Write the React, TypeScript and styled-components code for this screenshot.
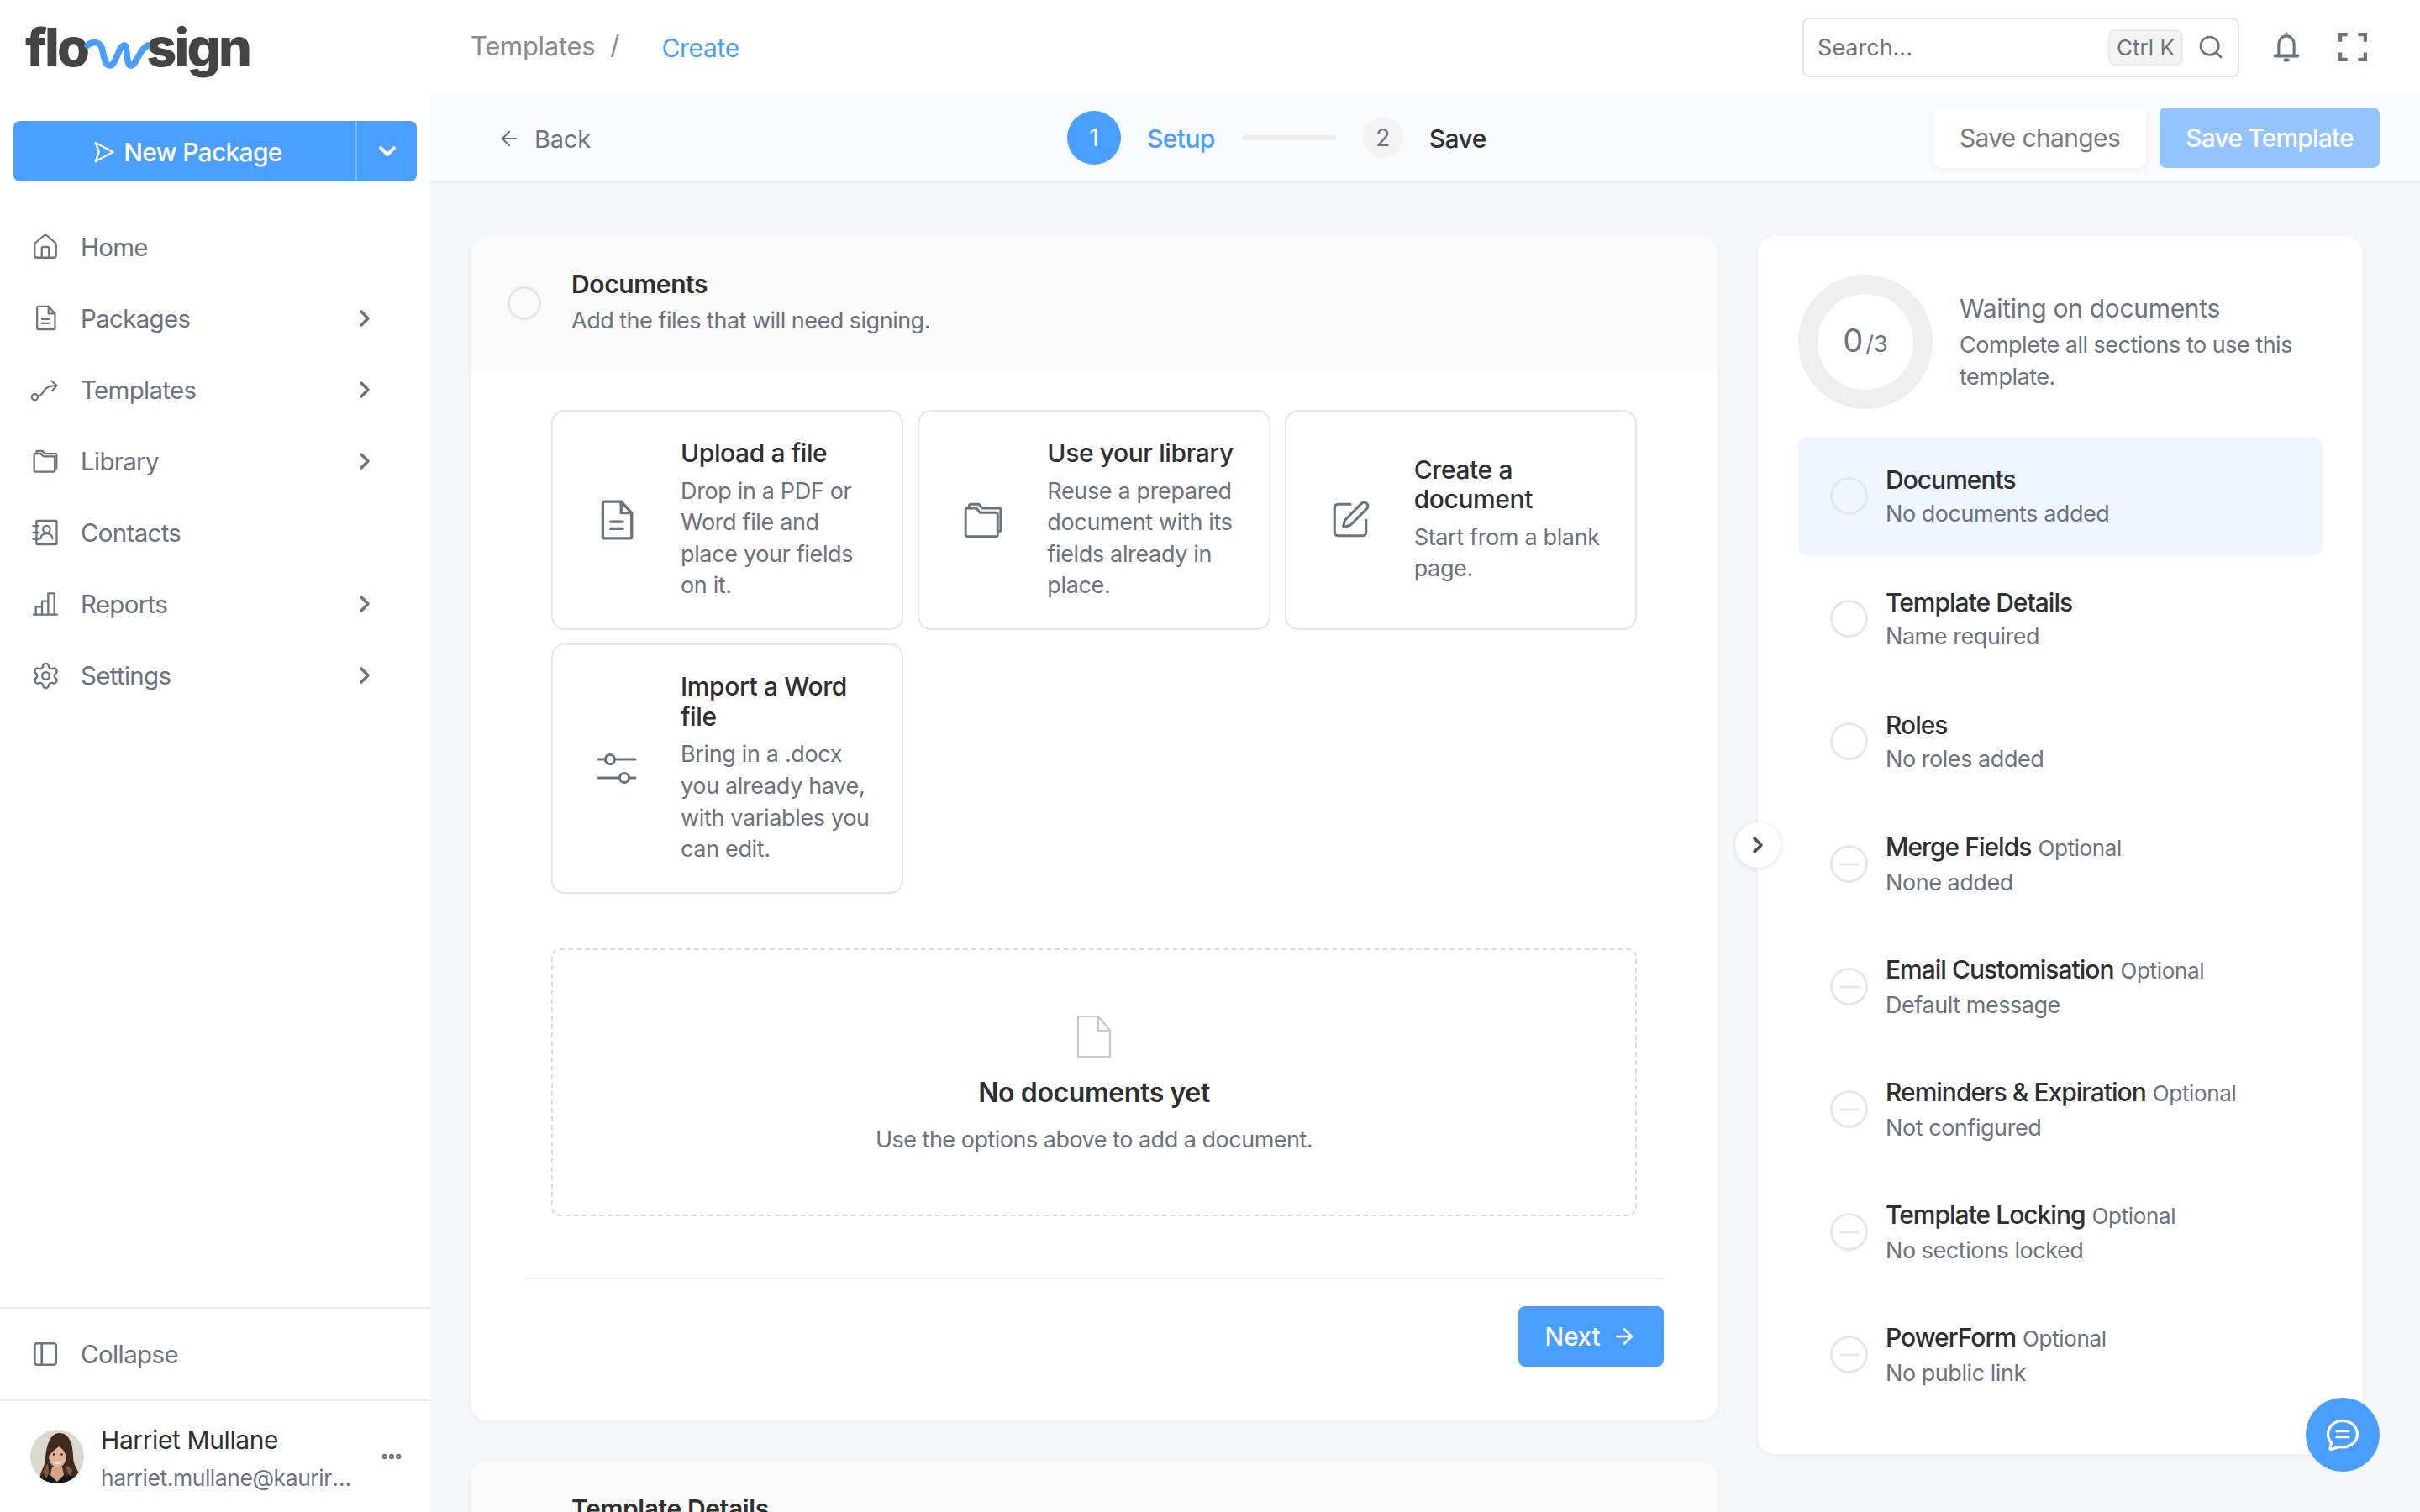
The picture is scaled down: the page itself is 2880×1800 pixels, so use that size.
import React from "react";
import styled, { createGlobalStyle } from "styled-components";
import { ChevronDown, ChevronRight, House, Settings, PanelLeft, ArrowLeft, ArrowRight, Search, SquarePen, Ellipsis, Minus } from "lucide-react";

const Global = createGlobalStyle`
  html, body { margin: 0; padding: 0; width: 2880px; height: 1800px; overflow: hidden; background: #f5f7fa; }
  body, button, input { font-family: Inter, "Noto Sans", sans-serif; }
  * { box-sizing: border-box; }
`;

const BLUE = "#4a9eff";
const INK = "#2e2f31";
const GREY = "#6b7280";

const Shell = styled.div`
  position: relative; display: grid; grid-template-columns: 512px 1fr; width: 2880px; height: 1800px; overflow: hidden;
`;
const Sidebar = styled.aside`display: flex; flex-direction: column; background: #fff; height: 1800px;`;
const LogoRow = styled.div`display: flex; align-items: flex-start; height: 144px; padding: 18px 0 0 30px; color: #444;`;
const LogoWord = styled.span`font-size: 63px; line-height: 76px; font-weight: 800; letter-spacing: -2.8px; font-variant-ligatures: none;`;
const LogoWave = styled.svg`width: 78px; height: 42px; margin: 26px -4px 0 -4px; flex: none; position: relative;`;
const NewGroup = styled.div`display: flex; height: 72px; margin: 0 16px; background: ${BLUE}; border-radius: 8px; color: #fff;`;
const NewMain = styled.div`flex: 1; display: flex; align-items: center; justify-content: center; gap: 10px; font-size: 30px; font-weight: 500; letter-spacing: -0.7px; padding: 2px 0 0 6px;`;
const NewCaret = styled.div`width: 73px; display: flex; align-items: center; justify-content: center; border-left: 2px solid rgba(255,255,255,.3); margin: 1px 0;`;
const Nav = styled.nav`display: flex; flex-direction: column; padding-top: 35px; flex: 1;`;
const NavItem = styled.div`display: flex; align-items: center; height: 85.1px; padding-left: 36px; color: ${GREY}; font-size: 29.5px; letter-spacing: -0.7px;`;
const NavIcon = styled.span`width: 36px; height: 36px; display: flex; align-items: center; justify-content: center; margin-right: 24px; flex: none;`;
const NavLabel = styled.span`width: 322px;`;
const CollapseRow = styled.div`display: flex; align-items: center; height: 110px; padding-left: 36px; border-top: 2px solid #ececec; color: ${GREY}; font-size: 29.5px; letter-spacing: -0.6px;`;
const UserRow = styled.div`display: flex; align-items: center; height: 134px; padding: 0 34px 0 36px; border-top: 2px solid #ececec;`;
const Avatar = styled.div`width: 64px; height: 64px; border-radius: 50%; overflow: hidden; flex: none; margin-right: 20px; svg { display: block; }`;
const UserText = styled.div`width: 304px; flex: none; display: flex; flex-direction: column; gap: 7px; padding-top: 5px;`;
const UserName = styled.div`font-size: 30px; line-height: 38px; color: ${INK}; letter-spacing: -0.4px;`;
const UserMail = styled.div`font-size: 26.5px; line-height: 38px; color: ${GREY}; letter-spacing: -0.45px; white-space: nowrap; overflow: hidden; text-overflow: ellipsis;`;
const UserMore = styled.span`margin-left: 28px; display: flex; color: ${GREY};`;

const Main = styled.main`display: flex; flex-direction: column; min-width: 0; height: 1800px;`;
const TopBar = styled.header`height: 112px; background: #fff; display: flex; align-items: center; padding: 0 0 0 48px; flex: none;`;
const Crumb = styled.span`font-size: 31px; color: #8a8a8a; letter-spacing: -0.3px; margin-top: -4px;`;
const Slash = styled.span`font-size: 31px; color: #8a8a8a; margin: -6px 50px 0 18px;`;
const CrumbNow = styled.span`font-size: 30px; color: ${BLUE}; letter-spacing: -0.3px; margin-top: 2px;`;
const SearchBox = styled.div`margin-left: auto; width: 520px; height: 71px; border: 2px solid #e6e6e6; border-radius: 8px; display: flex; align-items: center; padding: 0 16px; font-size: 27px; color: ${GREY};`;
const SearchText = styled.span`flex: 1;`;
const Kbd = styled.span`height: 43px; width: 89px; background: #f3f3f3; border: 2px solid #ebebeb; border-radius: 8px; display: flex; align-items: center; justify-content: center; font-size: 26px; color: ${GREY}; margin-right: 17px; white-space: nowrap;`;
const TopIcons = styled.div`display: flex; align-items: center; gap: 45px; margin: 0 63px 0 39px; color: ${GREY};`;
const SubBar = styled.div`height: 106px; flex: none; background: #fafbfd; border-bottom: 2px solid #ececef; display: grid; grid-template-columns: 678px auto 1fr; align-items: center; padding: 0 48px 0 80px;`;
const Back = styled.div`display: flex; align-items: center; gap: 16px; font-size: 29px; color: ${GREY}; letter-spacing: -0.2px; padding-top: 2px;`;
const Stepper = styled.div`display: flex; align-items: center;`;
const StepNum = styled.span<{ $on?: boolean }>`
  width: ${p => (p.$on ? 64 : 48)}px; height: ${p => (p.$on ? 64 : 48)}px; border-radius: 50%;
  display: flex; align-items: center; justify-content: center; font-size: 28px;
  background: ${p => (p.$on ? BLUE : "#f3f3f3")}; color: ${p => (p.$on ? "#fff" : GREY)};
`;
const StepName = styled.span<{ $on?: boolean }>`font-size: 30px; letter-spacing: -0.6px; margin-left: 31px; padding-top: 2px; font-weight: 500; color: ${p => (p.$on ? BLUE : INK)};`;
const StepLine = styled.span`width: 112px; height: 6px; border-radius: 3px; background: #ececec; margin: 0 32px;`;
const Actions = styled.div`display: flex; justify-content: flex-end; gap: 16px;`;
const GhostBtn = styled.div`width: 253px; height: 72px; background: #fff; border-radius: 8px; box-shadow: 0 2px 8px rgba(20,30,50,.06); display: flex; align-items: center; justify-content: center; font-size: 30px; color: #7b7b7b; letter-spacing: -0.65px;`;
const SolidBtn = styled.div`width: 262px; height: 72px; background: #93c4fd; border-radius: 8px; display: flex; align-items: center; justify-content: center; font-size: 30px; font-weight: 500; color: #fff; letter-spacing: -0.85px;`;
const Content = styled.div`flex: 1; display: grid; grid-template-columns: 1484px 720px; gap: 48px; padding: 63px 0 0 48px; align-items: start; overflow: hidden; background: #f5f7fa;`;
const LeftCol = styled.div`display: flex; flex-direction: column; gap: 49px;`;
const Card = styled.section`background: #fff; border-radius: 20px; box-shadow: 0 2px 6px rgba(20,30,50,.06); overflow: hidden;`;
const CardHead = styled.div`height: 160px; flex: none; background: #fafafa; display: flex; align-items: center; padding-left: 44px; gap: 36px;`;
const CardHeadText = styled.div`display: flex; flex-direction: column; min-height: 84px; margin-top: -3px;`;
const CardTitle = styled.div`font-size: 30px; line-height: 40px; font-weight: 600; color: ${INK}; letter-spacing: -0.4px;`;
const CardSub = styled.div`font-size: 27px; line-height: 40px; margin-top: 4px; color: ${GREY}; letter-spacing: -0.5px;`;
const HollowDot = styled.span<{ $size?: number }>`width: ${p => p.$size ?? 40}px; height: ${p => p.$size ?? 40}px; border-radius: 50%; border: 3px solid #e7e7e7; flex: none; display: flex; align-items: center; justify-content: center; color: #e7e7e7;`;
const CardBody = styled.div`padding: 47px 96px 0 96px;`;
const OptionGrid = styled.div`display: grid; grid-template-columns: repeat(3, 1fr); gap: 16.5px 17px; align-items: stretch;`;
const Option = styled.div`display: flex; align-items: center; border: 2px solid #e7e7e7; border-radius: 16px; padding: 32px 32px 32px 46px; box-shadow: 0 1px 2px rgba(0,0,0,.03);`;
const OptionIcon = styled.span`width: 60px; flex: none; margin-right: 46px; display: flex; justify-content: center; color: ${GREY};`;
const OptionText = styled.div`display: flex; flex-direction: column; gap: 8px;`;
const OptionTitle = styled.div`font-size: 30px; line-height: 35.5px; color: ${INK}; font-weight: 500; letter-spacing: -0.4px;`;
const OptionDesc = styled.div`font-size: 27px; line-height: 37.6px; color: ${GREY}; letter-spacing: -0.35px;`;
const Empty = styled.div`margin-top: 65px; height: 319px; border: 2px dashed #dcdcdc; border-radius: 10px; display: flex; flex-direction: column; align-items: center; padding-top: 77px;`;
const EmptyTitle = styled.div`font-size: 32px; line-height: 44px; font-weight: 600; color: ${INK}; margin-top: 19px; letter-spacing: -0.4px;`;
const EmptySub = styled.div`font-size: 27px; line-height: 40px; color: ${GREY}; margin-top: 14px; letter-spacing: -0.5px;`;
const CardFoot = styled.div`margin: 73px 64px 0 64px; border-top: 2px solid #f0f0f2; padding: 32px 0 64px; display: flex; justify-content: flex-end;`;
const NextBtn = styled.div`width: 173px; height: 72px; border-radius: 8px; background: ${BLUE}; color: #fff; display: flex; align-items: center; justify-content: center; gap: 14px; font-size: 30px; font-weight: 500; letter-spacing: -0.3px;`;

const Panel = styled.aside`position: relative; height: 1450px; background: #fff; border-radius: 20px; box-shadow: 0 2px 8px rgba(20,30,50,.05); padding: 46px 48px;`;
const Summary = styled.div`display: flex; align-items: center; gap: 32px; height: 160px; margin-bottom: 33px;`;
const Ring = styled.div`width: 160px; height: 160px; border-radius: 50%; border: 23px solid #efefef; flex: none; display: flex; align-items: baseline; justify-content: center; padding-top: 30px; color: ${GREY};`;
const RingBig = styled.span`font-size: 38px; line-height: 50px;`;
const RingSmall = styled.span`font-size: 27px; margin-left: 3px;`;
const SummaryTitle = styled.div`font-size: 30px; line-height: 40px; color: ${GREY}; letter-spacing: -0.3px;`;
const SummaryDesc = styled.div`font-size: 27px; line-height: 38px; color: ${GREY}; margin-top: 5px; letter-spacing: -0.5px;`;
const StepList = styled.div`display: flex; flex-direction: column; gap: 5px;`;
const StepRow = styled.div<{ $active?: boolean }>`display: flex; align-items: center; height: 141px; gap: 21px; padding-left: 38px; border-radius: 10px; background: ${p => (p.$active ? "#eff6ff" : "transparent")};`;
const StepText = styled.div`display: flex; flex-direction: column; padding-top: 2px;`;
const StepTitle = styled.div`font-size: 30px; line-height: 40px; font-weight: 500; color: ${INK}; letter-spacing: -1px; display: flex; align-items: baseline; gap: 8px;`;
const Optional = styled.span`font-size: 26px; font-weight: 400; color: ${GREY}; letter-spacing: -0.35px;`;
const StepDesc = styled.div`font-size: 27px; line-height: 40px; margin-top: 1px; color: ${GREY}; letter-spacing: -0.45px;`;
const Expand = styled.div`position: absolute; left: -27px; top: 698px; width: 54px; height: 54px; border-radius: 50%; background: #fff; box-shadow: 0 1px 6px rgba(20,30,50,.14); display: flex; align-items: center; justify-content: center; color: #4b5563;`;
const Fab = styled.div`position: absolute; right: 48px; bottom: 48px; width: 88px; height: 88px; border-radius: 50%; background: ${BLUE}; display: flex; align-items: center; justify-content: center; color: #fff;`;

const stroke = { fill: "none", stroke: "currentColor", strokeLinecap: "round" as const, strokeLinejoin: "round" as const };

const FileLines = ({ width, height, w }: { width: number; height: number; w: number }) => (
  <svg width={width} height={height} viewBox="0 0 20 24" {...stroke} strokeWidth={w}>
    <path d="M2.800 1.500h9.700l6 6.500v13.700c0 .5-.4.8-.8.8H2.800c-.5 0-.8-.3-.8-.8V2.300c0-.5.3-.8.8-.8Z" />
    <path d="M12.500 1.500V8h6" />
    <path d="M6.500 13h7M6.500 17h7" />
  </svg>
);
const FoldersIcon = ({ size = 32, w = 1.7 }: { size?: number; w?: number }) => (
  <svg width={size} height={size} viewBox="0 0 24 24" {...stroke} strokeWidth={w}>
    <path d="M2 20.500V6.200c0-.5.4-.9.900-.9h5.300l2 2.500h9.200c.5 0 .9.400.9.900v11.800c0 .5-.4.900-.9.900H2.900c-.5 0-.9-.4-.9-.9Z" />
    <path d="M4 5.300V3.900c0-.5.400-.9.900-.9h4.600l2 2.300h9.600c.5 0 .9.400.9.900v11.600c0 .5-.4.900-1.400.9" />
  </svg>
);
const RouteIcon = () => (
  <svg width={36} height={36} viewBox="0 0 24 24" {...stroke} strokeWidth={1.45}>
    <circle cx="3.600" cy="17.800" r="2.400" />
    <path d="M6 17.200c3.200-.5 3.900-3 5.500-5.200 1.400-2 3.400-3.200 9-3.300" />
    <path d="M17 5l4 3.700-3.400 4" />
  </svg>
);
const BarsIcon = () => (
  <svg width={32} height={32} viewBox="0 0 24 24" {...stroke} strokeWidth={1.7}>
    <path d="M1.500 21.500h21" />
    <path d="M3.500 21.500v-7H9v7M9 21.500v-12h5.500v12M14.500 21.500v-19H20v19" />
  </svg>
);
const ContactsIcon = () => (
  <svg width={34} height={34} viewBox="0 0 24 24" {...stroke} strokeWidth={1.6}>
    <rect x="4.500" y="2" width="17" height="20" rx="0.800" />
    <path d="M1.800 6.500h4.700M1.800 12h4.700M1.800 17.500h4.700" />
    <circle cx="13" cy="9.300" r="3" />
    <path d="M8 17c.4-2.600 2.400-4.200 5-4.200s4.600 1.600 5 4.200" />
  </svg>
);
const SendIcon = () => (
  <svg width={28} height={28} viewBox="0 0 24 24" {...stroke} strokeWidth={2}>
    <path d="M4 2.500 22 12 4 21.500 7.500 12Z" />
  </svg>
);
const BellIcon = () => (
  <svg width={34} height={38} viewBox="0 0 24 27" {...stroke} strokeWidth={2.2}>
    <path d="M12 2v2.200M5.500 21v-9.500C5.500 7.400 8.400 4.200 12 4.200s6.500 3.200 6.500 7.300V21" />
    <path d="M2.500 21h19" strokeWidth={2.8} />
    <path d="M10.800 24.500h2.400" strokeWidth={2.8} />
  </svg>
);
const FullIcon = () => (
  <svg width={34} height={34} viewBox="0 0 24 24" fill="none" stroke="currentColor" strokeWidth={3}>
    <path d="M1.500 7.500v-6h6M16.500 1.500h6v6M22.500 16.500v6h-6M7.500 22.500h-6v-6" />
  </svg>
);
const SlidersIcon = () => (
  <svg width={48} height={48} viewBox="0 0 24 24" {...stroke} strokeWidth={1.5}>
    <circle cx="8" cy="6.500" r="2.800" />
    <circle cx="16.500" cy="17.500" r="2.800" />
    <path d="M1 6.500h4.200M10.800 6.500H23M1 17.500h12.700M19.300 17.500H23" />
  </svg>
);
const BlankFile = () => (
  <svg width={44} height={52} viewBox="0 0 22 26" fill="none" stroke="#c9c9c9" strokeWidth={1.1} strokeLinejoin="round">
    <path d="M1.500 1h12l7 8.500V25h-19Z" />
    <path d="M13.500 1v8.500h7" />
  </svg>
);
const ChatIcon = () => (
  <svg width={42} height={42} viewBox="0 0 24 24" {...stroke} strokeWidth={1.9}>
    <path d="M12 2.500c5.500 0 10 3.900 10 9s-4.500 9-10 9c-.9 0-1.800-.1-2.600-.3L4.500 22c-.7.2-1.200-.4-1-1l.8-3.700C2.800 15.700 2 13.700 2 11.500c0-5.100 4.500-9 10-9Z" />
    <path d="M8 9.500h8M8 13.500h8" />
  </svg>
);
const Portrait = () => (
  <svg width={64} height={64} viewBox="0 0 64 64">
    <rect width="64" height="64" fill="#ddd8cf" />
    <path d="M12 62c-2-12 5-15 6-27 1-15 5-31 17-31 11 0 16 13 16 28 0 11 6 15 7 21l-10 11Z" fill="#3f2a1e" />
    <path d="M8 64c3-6 9-8 14-10l20 0c6 1 13 4 18 9v1Z" fill="#17161a" />
    <path d="M26 44h12l2 10-8 8-8-8Z" fill="#d4a28a" />
    <ellipse cx="32.500" cy="31" rx="10.500" ry="14" fill="#e0b29b" />
    <path d="M21.500 33c-1-11 5-19 13-18 6 1 9 7 8.500 17-2-6-5-10-9-12-3 3-9 6-12.500 13Z" fill="#3f2a1e" />
    <path d="M27 37.500c3 2.500 8 2.500 11 0-2 5-9 5-11 0Z" fill="#f4eee9" />
    <circle cx="28" cy="29.500" r="1.200" fill="#2a1a12" /><circle cx="37.500" cy="29.500" r="1.200" fill="#2a1a12" />
    <path d="M15 50c3-5 4-8 6-9 1 7 2 12-2 17ZM50 48c-3-3-5-5-7-5 0 5 1 9 5 12Z" fill="#80593c" />
  </svg>
);

const options = [
  { icon: <FileLines width={44} height={50} w={1.6} />, title: "Upload a file", desc: "Drop in a PDF or Word file and place your fields on it." },
  { icon: <FoldersIcon size={50} w={1.4} />, title: "Use your library", desc: "Reuse a prepared document with its fields already in place." },
  { icon: <SquarePen size={50} strokeWidth={1.5} />, title: "Create a document", desc: "Start from a blank page." },
  { icon: <SlidersIcon />, title: "Import a Word file", desc: "Bring in a .docx you already have, with variables you can edit." },
];

const nav = [
  { icon: <House size={34} strokeWidth={1.6} />, label: "Home" },
  { icon: <FileLines width={27} height={31} w={1.7} />, label: "Packages", more: true },
  { icon: <RouteIcon />, label: "Templates", more: true },
  { icon: <FoldersIcon />, label: "Library", more: true },
  { icon: <ContactsIcon />, label: "Contacts" },
  { icon: <BarsIcon />, label: "Reports", more: true },
  { icon: <Settings size={35} strokeWidth={1.6} />, label: "Settings", more: true },
];

const steps = [
  { title: "Documents", desc: "No documents added", active: true },
  { title: "Template Details", desc: "Name required" },
  { title: "Roles", desc: "No roles added" },
  { title: "Merge Fields", desc: "None added", optional: true },
  { title: "Email Customisation", desc: "Default message", optional: true },
  { title: "Reminders & Expiration", desc: "Not configured", optional: true },
  { title: "Template Locking", desc: "No sections locked", optional: true },
  { title: "PowerForm", desc: "No public link", optional: true },
];

export default function App() {
  return (
    <Shell>
      <Global />
      <Sidebar>
        <LogoRow>
          <LogoWord>flo</LogoWord>
          <LogoWave viewBox="0 0 78 42" fill="none">
            <path d="M4 10C12 4 20 6 22 16c2 9 3 18 9 18 7 0 10-24 17-24 5 0 1 24 8 24 6 0 10-20 20-24" stroke={BLUE} strokeWidth="7.500" strokeLinecap="round" strokeLinejoin="round" />
          </LogoWave>
          <LogoWord>sign</LogoWord>
        </LogoRow>
        <NewGroup>
          <NewMain><SendIcon />New Package</NewMain>
          <NewCaret><ChevronDown size={32} strokeWidth={3} /></NewCaret>
        </NewGroup>
        <Nav>
          {nav.map(n => (
            <NavItem key={n.label}>
              <NavIcon>{n.icon}</NavIcon>
              <NavLabel>{n.label}</NavLabel>
              {n.more && <ChevronRight size={32} strokeWidth={2.6} />}
            </NavItem>
          ))}
        </Nav>
        <CollapseRow>
          <NavIcon><PanelLeft size={34} strokeWidth={1.9} /></NavIcon>
          Collapse
        </CollapseRow>
        <UserRow>
          <Avatar><Portrait /></Avatar>
          <UserText>
            <UserName>Harriet Mullane</UserName>
            <UserMail>harriet.mullane@kauriri.co.nz</UserMail>
          </UserText>
          <UserMore><Ellipsis size={28} strokeWidth={3.4} /></UserMore>
        </UserRow>
      </Sidebar>
      <Main>
        <TopBar>
          <Crumb>Templates</Crumb>
          <Slash>/</Slash>
          <CrumbNow>Create</CrumbNow>
          <SearchBox>
            <SearchText>Search...</SearchText>
            <Kbd>Ctrl K</Kbd>
            <Search size={32} strokeWidth={2} />
          </SearchBox>
          <TopIcons>
            <BellIcon />
            <FullIcon />
          </TopIcons>
        </TopBar>
        <SubBar>
          <Back><ArrowLeft size={28} strokeWidth={1.9} />Back</Back>
          <Stepper>
            <StepNum $on>1</StepNum>
            <StepName $on>Setup</StepName>
            <StepLine />
            <StepNum>2</StepNum>
            <StepName>Save</StepName>
          </Stepper>
          <Actions>
            <GhostBtn>Save changes</GhostBtn>
            <SolidBtn>Save Template</SolidBtn>
          </Actions>
        </SubBar>
        <Content>
          <LeftCol>
            <Card>
              <CardHead>
                <HollowDot />
                <CardHeadText>
                  <CardTitle>Documents</CardTitle>
                  <CardSub>Add the files that will need signing.</CardSub>
                </CardHeadText>
              </CardHead>
              <CardBody>
                <OptionGrid>
                  {options.map(o => (
                    <Option key={o.title}>
                      <OptionIcon>{o.icon}</OptionIcon>
                      <OptionText>
                        <OptionTitle>{o.title}</OptionTitle>
                        <OptionDesc>{o.desc}</OptionDesc>
                      </OptionText>
                    </Option>
                  ))}
                </OptionGrid>
                <Empty>
                  <BlankFile />
                  <EmptyTitle>No documents yet</EmptyTitle>
                  <EmptySub>Use the options above to add a document.</EmptySub>
                </Empty>
              </CardBody>
              <CardFoot>
                <NextBtn>Next<ArrowRight size={30} strokeWidth={2} /></NextBtn>
              </CardFoot>
            </Card>
            <Card>
              <CardHead>
                <HollowDot />
                <CardHeadText>
                  <CardTitle>Template Details</CardTitle>
                </CardHeadText>
              </CardHead>
            </Card>
          </LeftCol>
          <Panel>
            <Summary>
              <Ring><RingBig>0</RingBig><RingSmall>/3</RingSmall></Ring>
              <div>
                <SummaryTitle>Waiting on documents</SummaryTitle>
                <SummaryDesc>Complete all sections to use this template.</SummaryDesc>
              </div>
            </Summary>
            <StepList>
              {steps.map(s => (
                <StepRow key={s.title} $active={s.active}>
                  <HollowDot $size={45}>{s.optional && <Minus size={36} strokeWidth={2} />}</HollowDot>
                  <StepText>
                    <StepTitle>{s.title}{s.optional && <Optional>Optional</Optional>}</StepTitle>
                    <StepDesc>{s.desc}</StepDesc>
                  </StepText>
                </StepRow>
              ))}
            </StepList>
            <Expand><ChevronRight size={32} strokeWidth={2.8} /></Expand>
          </Panel>
        </Content>
      </Main>
      <Fab><ChatIcon /></Fab>
    </Shell>
  );
}
